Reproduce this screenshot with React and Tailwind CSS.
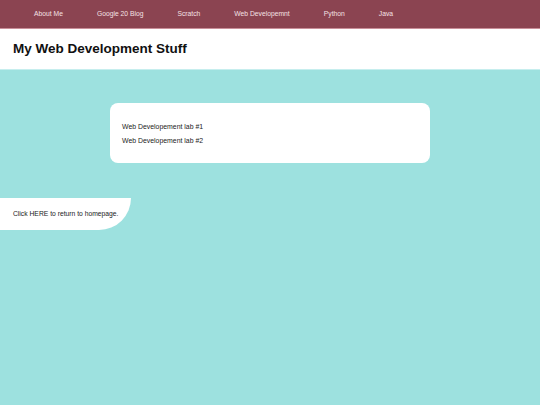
import React from "react";

const links = ["About Me", "Google 20 Blog", "Scratch", "Web Developemnt", "Python", "Java"];

export default function App() {
  return (
    <div className="min-h-[405px] bg-[#9de1df] font-['Liberation_Sans',Arial,sans-serif]">
      {/* Nav */}
      <nav className="h-[29px] bg-[#8b4451] border-b border-[#c98f99] flex items-center pl-[17px]">
        {links.map((l) => (
          <a key={l} className="px-[17px] text-[6.75px] text-[#f5e1e5] leading-none whitespace-nowrap">
            {l}
          </a>
        ))}
      </nav>

      {/* Header */}
      <header className="h-[41px] bg-white flex items-center px-[13px] border-b border-[#c6eeee]">
        <h1 className="text-[13.5px] font-bold text-[#111] leading-none">My Web Development Stuff</h1>
      </header>

      {/* Labs card */}
      <div className="pt-[33px] flex justify-center">
        <div className="w-[320px] h-[60px] bg-white rounded-[8px] px-[12px] pt-[20px]">
          <p className="text-[6.9px] text-[#222] leading-[8px] whitespace-nowrap">Web Developement lab #1</p>
          <p className="text-[6.9px] text-[#222] leading-[8px] mt-[6px] whitespace-nowrap">Web Developement lab #2</p>
        </div>
      </div>

      {/* Return link */}
      <div className="mt-[35px] w-[131px] h-[32px] bg-white rounded-br-[32px] flex items-center pl-[13px]">
        <span className="text-[6.75px] text-[#222] leading-none whitespace-nowrap">Click HERE to return to homepage.</span>
      </div>
    </div>
  );
}
